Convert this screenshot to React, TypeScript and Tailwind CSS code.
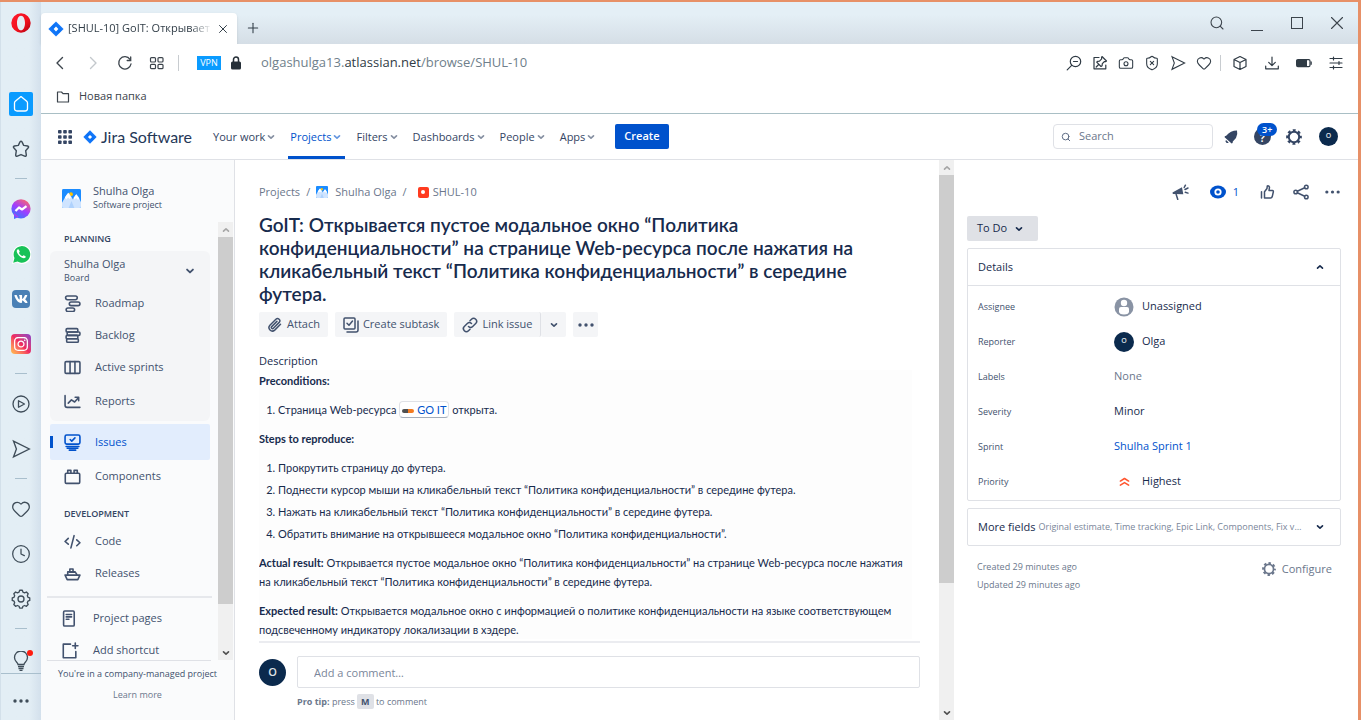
import React from "react";
import { Camera, Heart, Search, X, Plus, ShieldX, Clock } from "lucide-react";
import { FaVk, FaInstagram } from "react-icons/fa";

type IconProps = { className?: string; children: React.ReactNode; box?: number; stroke?: number };

function Svg({ className = "size-4", children, box = 24, stroke = 2 }: IconProps) {
  return (
    <svg
      className={className}
      viewBox={`0 0 ${box} ${box}`}
      fill="none"
      stroke="currentColor"
      strokeWidth={stroke}
      strokeLinecap="round"
      strokeLinejoin="round"
      aria-hidden="true"
    >
      {children}
    </svg>
  );
}

function Chevron({ className = "size-3", up = false }: { className?: string; up?: boolean }) {
  return (
    <Svg className={className} box={12} stroke={1.6}>
      <path d={up ? "M3.5 7.2 6 4.8l2.5 2.4" : "M3.5 4.8 6 7.2l2.5-2.4"} />
    </Svg>
  );
}

function JiraMark({ className }: { className: string }) {
  return (
    <svg className={className} viewBox="0 0 16 16" aria-hidden="true">
      <defs>
        <linearGradient id="jm" x1="0" y1="1" x2="1" y2="0">
          <stop offset="0" stopColor="#2684ff" />
          <stop offset="0.5" stopColor="#0870f5" />
          <stop offset="1" stopColor="#2684ff" />
        </linearGradient>
      </defs>
      <path fill="url(#jm)" d="M8 .4 15.6 8 8 15.6.4 8Z" />
      <path fill="#fff" d="M8 5.6 10.4 8 8 10.4 5.6 8Z" />
    </svg>
  );
}

function ProjectIcon({ className }: { className: string }) {
  return (
    <svg className={className} viewBox="0 0 20 20" aria-hidden="true">
      <rect width="20" height="20" rx="1.5" fill="#1b8cff" />
      <circle cx="9.500" cy="5.400" r="2" fill="#ffc400" />
      <path fill="#cfe4ff" d="M0 14.500 4.500 6.500 7 4l2.500 3.500 2 3.500 3.500-5.500 2.500 3L20 14v4.5q0 1.500-1.500 1.500h-17Q0 20 0 18.500Z" />
      <path fill="#fff" d="M3 9 6.500 4l3 5-1.500 1.500L6.500 9l-2 2ZM12 9.500l3-4L18 10l-1 1.500-2-2-2 1.500Z" />
      <path fill="#8fc0fb" d="M10 12.500 13 20H7Z" opacity=".5" />
    </svg>
  );
}

function SendIcon({ className }: { className: string }) {
  return (
    <Svg className={className} stroke={1.6}>
      <path d="M3 2.500 22 12 3 21.500 6.500 12Z" strokeLinejoin="miter" />
    </Svg>
  );
}

function Dots({ className }: { className: string }) {
  return (
    <svg className={className} viewBox="0 0 18 4" fill="currentColor" aria-hidden="true">
      <circle cx="3" cy="2" r="1.700" />
      <circle cx="9" cy="2" r="1.700" />
      <circle cx="15" cy="2" r="1.700" />
    </svg>
  );
}

function Cog({ className }: { className: string }) {
  return (
    <svg className={className} viewBox="0 0 24 24" fill="none" stroke="currentColor" aria-hidden="true">
      <circle cx="12" cy="12" r="7.800" strokeWidth="3" />
      <circle cx="12" cy="12" r="10" strokeWidth="3.600" strokeDasharray="4.200 3.654" strokeDashoffset="2.100" />
    </svg>
  );
}

function Avatar({ className }: { className: string }) {
  return (
    <span className={`flex shrink-0 items-center justify-center rounded-full bg-[#0b2a4d] font-semibold text-[#dfe1e6] ${className}`}>
      O
    </span>
  );
}

function RailItem({ label, children }: { label: string; children: React.ReactNode }) {
  return (
    <button aria-label={label} className="flex h-[45px] w-full shrink-0 items-center justify-center text-[#3f4d59]">
      {children}
    </button>
  );
}

function RailRule() {
  return (
    <div className="flex h-[15px] shrink-0 items-center justify-center">
      <span className="h-px w-3 bg-[#a9bfcd]" />
    </div>
  );
}

function OperaRail() {
  return (
    <aside className="flex w-[41px] shrink-0 flex-col border-l border-[#d3e0ea] bg-linear-to-r from-[#e3eef5] from-70% to-[#d3e0ec]">
      <button aria-label="Opera" className="flex h-[79px] shrink-0 items-start justify-center pt-[11px]">
        <svg className="size-5" viewBox="0 0 20 20" aria-hidden="true">
          <defs>
            <linearGradient id="op" x1="0" y1="0" x2="1" y2="1">
              <stop offset="0" stopColor="#ff1b2d" />
              <stop offset="0.600" stopColor="#f0101c" />
              <stop offset="1" stopColor="#a70014" />
            </linearGradient>
          </defs>
          <path
            fill="url(#op)"
            fillRule="evenodd"
            d="M10 .3a9.700 9.700 0 1 1 0 19.400A9.700 9.700 0 0 1 10 .3Zm0 2.400c-2.500 0-4 3.200-4 7.300s1.500 7.300 4 7.300 4-3.200 4-7.300-1.500-7.300-4-7.300Z"
          />
        </svg>
      </button>
      <RailItem label="Home">
        <span className="flex size-6 items-center justify-center rounded-xs bg-[#0a9bff] text-white">
          <Svg className="size-[18px]" box={18} stroke={1.3}>
            <path d="M2.500 8Q2.500 7 3.300 6.300L9 1.600l5.700 4.700q.8.700.8 1.700v5.500q0 2.500-2.500 2.500H5q-2.500 0-2.500-2.500Z" />
          </Svg>
        </span>
      </RailItem>
      <RailItem label="Speed dial">
        <Svg className="size-5" box={24} stroke={1.7}>
          <path d="M10.800 3.500q1.200-1.500 2.400 0L15.200 7.600l4.700.8q2 .6.800 2.200L17.600 14l.8 5.300q0 2-2 1.300L12 18.700l-4.400 1.900q-2 .7-2-1.300L6.400 14l-3.100-3.400q-1.200-1.600.8-2.200l4.700-.8Z" />
        </Svg>
      </RailItem>
      <RailRule />
      <RailItem label="Messenger">
        <svg className="size-5" viewBox="0 0 20 20" aria-hidden="true">
          <defs>
            <linearGradient id="ms" x1="0.200" y1="1" x2="0.800" y2="0">
              <stop offset="0" stopColor="#2b7dff" />
              <stop offset="0.500" stopColor="#a23cff" />
              <stop offset="1" stopColor="#ff6968" />
            </linearGradient>
          </defs>
          <g fill="url(#ms)">
            <circle cx="10" cy="9.800" r="9.600" />
            <path d="M3 14v6l5-2Z" />
          </g>
          <path d="m4.500 12 3.500-3.500 3 2 4.500-3.300" fill="none" stroke="#fff" strokeWidth="2.200" strokeLinejoin="round" />
        </svg>
      </RailItem>
      <RailItem label="WhatsApp">
        <svg className="size-5" viewBox="0 0 20 20" aria-hidden="true">
          <path fill="#fff" d="M1 20l1.500-5.500A9.500 9.500 0 1 1 6 18.500Z" />
          <path fill="#18c258" d="M2.200 18.700l1.300-4.600A8.300 8.300 0 1 1 6.500 17.400Z" />
          <path fill="#fff" d="M6.500 5.500c-1.500 1-.8 3.500 1.500 5.900s5 3.500 6.300 2.300c.7-.7.600-1.400-.2-1.800l-1.500-.7c-.5-.2-.8.900-1.400.8-1.200-.4-2.700-1.800-3.200-3-.1-.5.900-.8.700-1.400L8 5.900c-.3-.7-.9-.8-1.500-.4Z" />
        </svg>
      </RailItem>
      <RailItem label="VK">
        <span className="flex size-[18px] items-center justify-center rounded-[4px] bg-[#4a80b5] text-white">
          <FaVk className="size-[14px]" />
        </span>
      </RailItem>
      <RailItem label="Instagram">
        <span className="flex size-5 items-center justify-center rounded-[4px] bg-linear-to-bl from-[#8a3ac8] via-[#f0285f] to-[#ffc14d] text-white">
          <FaInstagram className="size-4" />
        </span>
      </RailItem>
      <RailRule />
      <RailItem label="Player">
        <Svg className="size-[18px]" box={18} stroke={1.3}>
          <circle cx="9" cy="9" r="8" />
          <path d="M6.500 5.700 12.500 9l-6 3.300Z" />
        </Svg>
      </RailItem>
      <RailItem label="My Flow">
        <SendIcon className="size-5" />
      </RailItem>
      <RailRule />
      <RailItem label="Pinboards">
        <Heart className="size-5" strokeWidth={1.5} />
      </RailItem>
      <RailItem label="History">
        <Clock className="size-5" strokeWidth={1.5} />
      </RailItem>
      <RailItem label="Settings">
        <Svg className="size-5" stroke={1.6}>
          <circle cx="12" cy="12" r="3.600" />
          <path d="M9.700 3.700 10.400 1.500h3.200l.7 2.200 2 .9 2.200-1 2.100 2.200-1 2.200.8 2 2.100.7v3l-2.100.8-.8 2 1 2.200-2.100 2.100-2.200-1-2 .9-.7 2.200h-3.200l-.7-2.200-2-.9-2.200 1-2.100-2.100 1-2.200-.8-2L1.500 13.700v-3l2.100-.7.8-2-1-2.200 2.100-2.200 2.200 1Z" />
        </Svg>
      </RailItem>
      <RailRule />
      <button aria-label="Tips" className="relative flex h-[38px] shrink-0 items-end justify-center border-b border-[#a9bfcd] pb-[2px] text-[#3f4d59]">
        <svg className="h-5 w-4" viewBox="0 0 16 20" fill="none" stroke="currentColor" strokeWidth="1.300" aria-hidden="true">
          <path d="M5 13.500c0-2-3.500-3-3.500-7a6.500 6.500 0 0 1 13 0c0 4-3.500 5-3.500 7Z" />
          <path d="M5 15.500h6M5.500 17.500h5M6.500 19.300h3" />
        </svg>
        <span className="absolute top-[14px] right-2 size-[6px] rounded-full bg-[#ff1b0e]" />
      </button>
      <button aria-label="More" className="flex flex-1 items-center justify-center pt-2 text-[#3f4d59]">
        <Dots className="h-1 w-[18px]" />
      </button>
    </aside>
  );
}

function TabBar() {
  return (
    <div className="flex h-[42px] shrink-0 items-end bg-linear-to-b from-[#e4eff6] from-30% to-[#d5dee6]">
      <div className="flex h-[31px] w-[196px] items-center rounded-t-sm bg-white px-[7px] shadow-sm">
        <JiraMark className="size-4 shrink-0" />
        <span className="ml-1 flex-1 overflow-hidden mask-r-from-85% text-[11px] whitespace-nowrap text-[#323e48]">
          [SHUL-10] GoIT: Открывает
        </span>
        <button aria-label="Close tab" className="ml-1 text-[#323e48]">
          <X className="size-[14px]" strokeWidth={1.7} />
        </button>
      </div>
      <button aria-label="New tab" className="mb-2 ml-2 text-[#323e48]">
        <Plus className="size-4" strokeWidth={1.6} />
      </button>
      <div className="mr-[13px] mb-[13px] ml-auto flex items-center gap-6 text-[#3c444c]">
        <button aria-label="Search tabs">
          <Search className="size-4" strokeWidth={1.6} />
        </button>
        <button aria-label="Minimize" className="flex h-4 w-4 items-end justify-center">
          <span className="h-px w-3 bg-current" />
        </button>
        <button aria-label="Maximize" className="flex size-4 items-center justify-center">
          <span className="size-3 border border-current" />
        </button>
        <button aria-label="Close" className="flex size-4 items-center justify-center">
          <Svg className="size-3" box={12} stroke={1.1}>
            <path d="m.5.5 11 11M11.500.5l-11 11" />
          </Svg>
        </button>
      </div>
    </div>
  );
}

function AddressBar() {
  return (
    <div className="flex h-[38px] shrink-0 items-center bg-white px-3 text-[#3c444c]">
      <button aria-label="Back">
        <Svg className="size-4" box={16} stroke={1.4}>
          <path d="M9.500 2.500 4 8l5.500 5.500" />
        </Svg>
      </button>
      <button aria-label="Forward" className="ml-4 text-[#c3c8cc]">
        <Svg className="size-4" box={16} stroke={1.4}>
          <path d="m5.500 2.500 5.500 5.500-5.500 5.500" />
        </Svg>
      </button>
      <button aria-label="Reload" className="ml-4">
        <Svg className="size-4" box={16} stroke={1.3}>
          <path d="M13 4.300A6.200 6.200 0 1 0 14 9" />
          <path d="M13.700 2v3.500h-3.500" strokeLinejoin="miter" />
        </Svg>
      </button>
      <button aria-label="Speed dial" className="ml-4">
        <Svg className="size-4" box={16} stroke={1.2}>
          <rect x="1.500" y="2.600" width="5" height="4.400" rx="1" />
          <rect x="9" y="2.600" width="5" height="4.400" rx="1" />
          <rect x="1.500" y="9.300" width="5" height="4.400" rx="1" />
          <rect x="9" y="9.300" width="5" height="4.400" rx="1" />
        </Svg>
      </button>
      <span className="mx-[13px] h-4 w-px bg-[#c8ccd0]" />
      <button className="ml-[5px] h-[14px] w-6 bg-[#0a9bff] text-center text-[9px] leading-[14px] text-white">VPN</button>
      <svg className="ml-[9px] h-[14px] w-3" viewBox="0 0 12 14" aria-hidden="true">
        <path fill="none" stroke="#262f38" strokeWidth="1.500" d="M3.500 6V3.500a2.500 2.500 0 0 1 5 0V6" />
        <rect x="1" y="5.500" width="10" height="8" rx="1.500" fill="#262f38" />
      </svg>
      <button aria-label="Address" className="ml-[19px] flex-1 text-left text-[13px] text-[#6f7f8b]">
        olgashulga13.<span className="text-[#2f3b45]">atlassian.net</span>/browse/SHUL-10
      </button>
      <div className="flex items-center gap-[10px] text-[#303b45]">
        <button aria-label="Zoom out">
          <Svg className="size-4" box={16} stroke={1.2}>
            <circle cx="9.500" cy="6.500" r="5.200" />
            <path d="m5.700 10.300-4.500 4.500M7.500 6.500h4" />
          </Svg>
        </button>
        <button aria-label="Pin page">
          <Svg className="size-4" box={16} stroke={1.2}>
            <path d="M7 2.500H2v11.300h11.800V10" />
            <path d="m10 1.500 4.500 4.500-1 .7-1-.2-2.200 2.200-.2 2L9 11.500 4.700 7.200l.8-.9 2-.2 2.200-2.200-.2-1.200ZM6.700 9.500l-2.500 2.500" />
          </Svg>
        </button>
        <button aria-label="Snapshot">
          <Camera className="size-4" strokeWidth={1.6} />
        </button>
        <button aria-label="Ad blocker">
          <ShieldX className="size-4" strokeWidth={1.6} />
        </button>
        <button aria-label="Send">
          <SendIcon className="size-4" />
        </button>
        <button aria-label="Favourite">
          <Heart className="size-4" strokeWidth={1.6} />
        </button>
        <span className="-ml-[2px] mr-px h-4 w-px bg-[#c8ccd0]" />
        <div className="flex items-center gap-4">
          <button aria-label="Extensions">
            <Svg className="size-4" box={16} stroke={1.2}>
              <path d="m8 1.500 6 3v7l-6 3-6-3v-7ZM2 4.500l6 3 6-3M8 7.500v7" />
            </Svg>
          </button>
          <button aria-label="Downloads">
            <Svg className="size-4" box={16} stroke={1.2}>
              <path d="M8 2v8.500M4.700 7.300 8 10.600l3.300-3.300M1.700 11v2.800h12.600V11" />
            </Svg>
          </button>
          <button aria-label="Battery saver">
            <svg className="size-4" viewBox="0 0 16 16" aria-hidden="true">
              <rect x=".6" y="4.600" width="13.400" height="7" rx="1.300" fill="none" stroke="currentColor" strokeWidth="1.200" />
              <path fill="currentColor" d="M1 5h10v6.500H1ZM14.500 6.500h1.300v3.200h-1.300Z" />
            </svg>
          </button>
          <button aria-label="Easy setup" className="mr-[2px]">
            <Svg className="size-4" box={16} stroke={1.2}>
              <path d="M2 3.500h12M2 8h12M2 12.500h12M5.500 2v3M11 6.500v3M5.500 11v3" />
            </Svg>
          </button>
        </div>
      </div>
    </div>
  );
}

const navItems = ["Your work", "Projects", "Filters", "Dashboards", "People", "Apps"];

function JiraHeader() {
  return (
    <header className="flex h-[46px] shrink-0 items-center border-b border-[#dfe1e6] bg-white pr-5 pl-4 text-[#344563]">
      <button aria-label="Switch to">
        <svg className="size-4" viewBox="0 0 16 16" fill="currentColor" aria-hidden="true">
          {[1, 6.2, 11.4].map((y) => [1, 6.2, 11.4].map((x) => <rect key={`${x}-${y}`} x={x} y={y} width="3.600" height="3.600" rx="0.800" />))}
        </svg>
      </button>
      <a href="#home" className="ml-[10px] flex items-center gap-1">
        <JiraMark className="size-[14px]" />
        <span className="font-['Lato',sans-serif] text-[16px] leading-5 whitespace-nowrap text-[#253858]">Jira Software</span>
      </a>
      <nav className="ml-[15px] flex gap-px self-stretch text-[11px] font-medium">
        {navItems.map((item) => (
          <button
            key={item}
            className={
              item === "Projects"
                ? "mx-1 flex items-center border-b-3 border-[#0052cc] px-[2px] pt-1 whitespace-nowrap text-[#0052cc]"
                : "flex items-center px-[6px] pt-px whitespace-nowrap"
            }
          >
            {item}
            <Chevron className="size-3 opacity-60" />
          </button>
        ))}
      </nav>
      <button className="ml-3 h-[25px] rounded-xs bg-[#0052cc] px-[9px] text-[11px] font-semibold text-white">Create</button>
      <label className="ml-auto flex h-[25px] w-40 items-center gap-2 rounded-sm border border-[#dfe1e6] px-[7px] text-[#5e6c84]">
        <Search className="size-[10px] shrink-0" strokeWidth={2.4} />
        <input type="search" aria-label="Search" placeholder="Search" className="w-full min-w-0 text-[11px] outline-none placeholder:text-[#6b778c]" />
      </label>
      <button aria-label="Notifications" className="ml-[10px] text-[#344563]">
        <svg className="size-4" viewBox="0 0 16 16" fill="currentColor" aria-hidden="true">
          <path d="M14 1.500Q15 5.500 13 9L9.800 12.600 9.600 14 8.600 14.400 1.600 8.200 1.800 7.200 3.200 6.800Q7.500 1.500 14 1.500Z" />
          <path d="M3 11 5.700 13.400a1.800 1.800 0 0 1-2.700-2.400Z" />
        </svg>
      </button>
      <button aria-label="Help" className="relative ml-[15px] flex size-[17px] items-end justify-center rounded-full bg-[#344563] text-[10px] leading-[13px] font-bold text-white">
        ?
        <span className="absolute -top-[5px] left-[3px] z-10 rounded-full bg-[#0052cc] px-[5px] text-[9px] leading-[13px] font-semibold">3+</span>
      </button>
      <button aria-label="Settings" className="ml-[15px]">
        <Cog className="size-4" />
      </button>
      <button aria-label="Profile" className="ml-[17px]">
        <Avatar className="size-[19px] text-[7px]" />
      </button>
    </header>
  );
}

const navIcons: Record<string, React.ReactNode> = {
  Roadmap: (
    <>
      <rect x="1.500" y="1" width="11" height="3.400" rx="1.700" />
      <rect x="5" y="6.600" width="10" height="3.400" rx="1.700" />
      <rect x="2" y="12.200" width="8" height="3.400" rx="1.700" />
    </>
  ),
  Backlog: (
    <>
      <rect x="2" y="1.500" width="11" height="3.200" rx="1" />
      <rect x="3" y="4.700" width="12" height="3.200" rx="1" />
      <rect x="2" y="7.900" width="11" height="3.200" rx="1" />
      <rect x="2.500" y="11.100" width="11" height="3.200" rx="1" />
    </>
  ),
  "Active sprints": (
    <>
      <rect x="1" y="2.500" width="14" height="11" rx="1" />
      <path d="M5.700 2.500v11M10.300 2.500v11" />
    </>
  ),
  Reports: <path d="M1 2.500v9q0 2 2 2h12M4 9.500l3-3 3 2 3.500-4M10.500 4h3.300v3.300" />,
  Issues: (
    <>
      <rect x="1" y="1" width="14" height="8.500" rx="1.500" />
      <path d="m5.800 5.200 1.500 1.500 3-3M2 11.700h12M3 13.400h10M5 15.200h6" />
    </>
  ),
  Components: (
    <>
      <rect x="1.200" y="5" width="13.600" height="9.500" rx="1" />
      <path d="M3.500 5V2.200h3V5M9.500 5V2.200h3V5" />
    </>
  ),
  Code: <path d="M4 5 1 8l3 2.500M12 6.500l3 2.700L12 12M9.500 2.500l-3 11.500" />,
  Releases: (
    <>
      <path d="M1 9.500h14l-2 4.300H3L1 9.500ZM3.500 9.500v-3h7l2 3M5.500 6V3.700h3V6M5 6.700h5" />
    </>
  ),
  "Project pages": (
    <>
      <rect x="1.500" y="1" width="10" height="14" rx="1" />
      <path d="M4 4.300h5M4 6.500h5M4 8.700h2.500" />
    </>
  ),
  "Add shortcut": <path d="M8 2H1.200v12.800H13V9M12.500 1v5M10 3.500h5" />,
};

function SideLink({ name, active = false, height = "h-8" }: { name: string; active?: boolean; height?: string }) {
  return (
    <a
      href={`#${name}`}
      className={`flex items-center gap-[14px] pl-[14px] text-[11px] ${height} ${
        active ? "relative rounded-xs bg-[#e2edfd] text-[#0052cc]" : "text-[#42526e]"
      }`}
    >
      {active && <span className="absolute left-0 h-3 w-[3px] bg-[#0052cc]" />}
      <Svg className="size-[17px] shrink-0" box={16} stroke={1.5}>
        {navIcons[name]}
      </Svg>
      {name}
    </a>
  );
}

function Scrollbar({ thumb }: { thumb: string }) {
  return (
    <div className="flex w-[15px] shrink-0 flex-col bg-[#f0f0f0] text-[#a6a6a6]">
      <span className="flex h-[15px] shrink-0 items-center justify-center">
        <Chevron up />
      </span>
      <div className="flex-1">
        <div className={`bg-[#cdcdcd] ${thumb}`} />
      </div>
      <span className="flex h-[15px] shrink-0 items-center justify-center text-[#505050]">
        <Chevron />
      </span>
    </div>
  );
}

function JiraSidebar() {
  return (
    <aside className="flex w-[194px] shrink-0 flex-col border-r border-[#dfe1e6] bg-[#fafbfc] text-[#42526e]">
      <div className="flex h-[62px] shrink-0 items-center gap-3 pt-[14px] pl-[21px]">
        <ProjectIcon className="size-[19px]" />
        <div>
          <div className="text-[11px] leading-[14px] font-medium">Shulha Olga</div>
          <div className="text-[9px] leading-[14px]">Software project</div>
        </div>
      </div>
      <div className="flex min-h-0 flex-1 overflow-hidden pr-px">
        <div className="min-w-0 flex-1 overflow-hidden pr-2 pl-[9px]">
          <h2 className="mt-[9px] pl-[14px] text-[9px] leading-4 font-semibold text-[#344563]">PLANNING</h2>
          <div className="mt-1 h-[170px] rounded-md bg-[#f4f5f7] pt-[6px]">
            <button className="flex w-full items-center justify-between pr-[13px] pb-[2px] pl-[14px] text-left">
              <span>
                <span className="block text-[11px] leading-[14px] font-medium">Shulha Olga</span>
                <span className="block text-[9px] leading-[14px]">Board</span>
              </span>
              <Chevron className="size-[14px]" />
            </button>
            <SideLink name="Roadmap" />
            <SideLink name="Backlog" />
            <SideLink name="Active sprints" />
            <SideLink name="Reports" height="h-9" />
          </div>
          <div className="mt-[3px]">
            <SideLink name="Issues" active height="h-9" />
            <SideLink name="Components" />
          </div>
          <h2 className="mt-[14px] pl-[14px] text-[9px] leading-4 font-semibold text-[#344563]">DEVELOPMENT</h2>
          <div className="mt-[3px]">
            <SideLink name="Code" />
            <SideLink name="Releases" />
          </div>
          <div className="mt-[7px] -mr-[2px] -ml-[3px] border-t-2 border-[#e6e8ec] pt-1 pl-px">
            <SideLink name="Project pages" />
            <SideLink name="Add shortcut" />
          </div>
        </div>
        <Scrollbar thumb="h-[90%]" />
      </div>
      <div className="h-[60px] shrink-0">
        <div className="mr-[23px] ml-[6px] border-t border-[#dfe1e6]" />
        <p className="mt-[6px] text-center text-[9px] leading-[14px] whitespace-nowrap">You're in a company-managed project</p>
        <a href="#learn" className="mt-[7px] block text-center text-[9px] leading-[14px] text-[#6b778c]">
          Learn more
        </a>
      </div>
    </aside>
  );
}

const toolButton = "flex h-[25px] items-center gap-1 rounded-xs bg-[#f4f5f7] px-2 text-[11px] font-medium text-[#42526e]";

function IssueBody() {
  return (
    <main className="flex min-w-0 flex-1 flex-col bg-white pr-[19px] pl-6 text-[#172b4d]">
      <div className="min-h-0 flex-1 overflow-hidden">
        <nav aria-label="Breadcrumb" className="mt-6 flex h-4 items-center gap-[6px] text-[11px] text-[#6b778c]">
          <a href="#projects">Projects</a>
          <span>/</span>
          <a href="#shulha" className="flex items-center gap-[7px]">
            <ProjectIcon className="size-3" />
            Shulha Olga
          </a>
          <span>/</span>
          <a href="#shul-10" className="ml-[5px] flex items-center gap-1">
            <span className="flex size-[11px] items-center justify-center rounded-xs bg-[#ff3b1f]">
              <span className="size-1 rounded-full bg-white" />
            </span>
            SHUL-10
          </a>
        </nav>
        <h1 className="mt-[13px] mr-2 font-['Lato','Open_Sans',sans-serif] text-[19px] leading-[23px] font-semibold">
          GoIT: Открывается пустое модальное окно “Политика
          <br />
          конфиденциальности” на странице Web-ресурса после нажатия на
          <br />
          кликабельный текст “Политика конфиденциальности” в середине
          <br />
          футера.
        </h1>
        <div className="mt-[7px] flex gap-[7px]">
          <button className={toolButton}>
            <Svg className="size-4" box={16} stroke={1.5}>
              <path d="m13.500 7.200-5.800 5.900a3.400 3.400 0 0 1-4.800-4.800l6-6.100a2.300 2.300 0 0 1 3.300 3.200l-5.800 5.900a1.200 1.200 0 0 1-1.700-1.700l5.200-5.200" />
            </Svg>
            Attach
          </button>
          <button className={toolButton}>
            <Svg className="size-4" box={16} stroke={1.5}>
              <rect x="1" y="1" width="11" height="11" rx="1" />
              <path d="m4 6.200 2 2L9.500 4M15 4v9q0 2-2 2H4" />
            </Svg>
            Create subtask
          </button>
          <div className="flex">
            <button className={`${toolButton} border-r border-[#dfe1e6]`}>
              <Svg className="size-4" box={16} stroke={1.5}>
                <path d="M6.500 9.500a3 3 0 0 0 4.200 0l3-3a2.900 2.900 0 0 0-4.200-4.200L8 3.800M9.500 6.500a3 3 0 0 0-4.200 0l-3 3a2.900 2.900 0 0 0 4.200 4.200L8 12.200" />
              </Svg>
              Link issue
            </button>
            <button aria-label="Link options" className="flex h-[25px] w-[25px] items-center justify-center rounded-xs bg-[#f4f5f7] text-[#42526e]">
              <Chevron />
            </button>
          </div>
          <button aria-label="More actions" className="flex h-[25px] w-[25px] items-center justify-center rounded-xs bg-[#f4f5f7] text-[#42526e]">
            <Dots className="h-1 w-[18px]" />
          </button>
        </div>
        <h2 className="mt-[15px] text-[11px] leading-[18px] font-medium">Description</h2>
        <div className="-ml-[7px] mr-2 flex flex-col gap-[10px] bg-[#fdfdfd] pt-px pl-[7px] font-['Lato','Open_Sans',sans-serif] text-[11px] leading-[19px]">
          <p className="font-bold">Preconditions:</p>
          <ol className="list-decimal pl-[19px]">
            <li>
              Страница Web-ресурса{" "}
              <a href="#goit" className="rounded-sm border border-[#dfe1e6] border-b-[#a5adba] bg-white px-[2px] py-px text-[#0052cc]">
                <span className="inline-block h-1 w-[6px] rounded-l-xs bg-[#505050] align-middle" />
                <span className="mr-[3px] inline-block h-1 w-[6px] rounded-r-xs bg-[#f47b20] align-middle" />
                GO IT
              </a>{" "}
              открыта.
            </li>
          </ol>
          <p className="font-bold">Steps to reproduce:</p>
          <ol className="flex list-decimal flex-col gap-[3px] pl-[19px]">
            <li>Прокрутить страницу до футера.</li>
            <li>Поднести курсор мыши на кликабельный текст “Политика конфиденциальности” в середине футера.</li>
            <li>Нажать на кликабельный текст “Политика конфиденциальности” в середине футера.</li>
            <li>Обратить внимание на открывшееся модальное окно “Политика конфиденциальности”.</li>
          </ol>
          <p>
            <strong>Actual result:</strong> Открывается пустое модальное окно “Политика конфиденциальности” на странице Web-ресурса после нажатия
            <br />
            на кликабельный текст “Политика конфиденциальности” в середине футера.
          </p>
          <p>
            <strong>Expected result:</strong> Открывается модальное окно с информацией о политике конфиденциальности на языке соответствующем
            <br />
            подсвеченному индикатору локализации в хэдере.
          </p>
        </div>
      </div>
      <form className="h-[79px] shrink-0 border-t-2 border-[#ebecf0] pt-[13px]">
        <div className="flex items-center gap-[11px]">
          <Avatar className="size-[27px] text-[11px]" />
          <input
            type="text"
            aria-label="Add a comment"
            placeholder="Add a comment…"
            className="h-8 min-w-0 flex-1 rounded-xs border border-[#dfe1e6] px-4 text-[11px] outline-none placeholder:text-[#7a869a]"
          />
        </div>
        <p className="mt-[6px] ml-[38px] text-[9px] leading-4 text-[#6b778c]">
          <strong>Pro tip:</strong> press <kbd className="rounded-xs bg-[#dfe1e6] px-1 py-px font-['Open_Sans',sans-serif] font-bold text-[#42526e]">M</kbd> to comment
        </p>
      </form>
    </main>
  );
}

const fields: { label: string; value: string; icon?: React.ReactNode; tone?: string }[] = [
  {
    label: "Assignee",
    value: "Unassigned",
    icon: (
      <svg className="size-5" viewBox="0 0 20 20" aria-hidden="true">
        <circle cx="10" cy="10" r="9.500" fill="#8993a4" />
        <circle cx="10" cy="6" r="3.200" fill="#fff" />
        <path fill="#fff" d="M5 12q0-2 2-2h6q2 0 2 2v2.500q0 3-5 3t-5-3Z" />
      </svg>
    ),
  },
  { label: "Reporter", value: "Olga", icon: <Avatar className="size-5 text-[7px]" /> },
  { label: "Labels", value: "None", tone: "text-[#6b778c]" },
  { label: "Severity", value: "Minor" },
  { label: "Sprint", value: "Shulha Sprint 1", tone: "text-[#0052cc]" },
  {
    label: "Priority",
    value: "Highest",
    icon: (
      <span className="flex w-5 justify-center text-[#ff5630]">
        <Svg className="size-[11px]" box={12} stroke={1.7}>
          <path d="M1.500 5.500 6 2.700l4.500 2.800M1.500 10 6 7.200l4.500 2.800" />
        </Svg>
      </span>
    ),
  },
];

function DetailsPanel() {
  return (
    <aside className="flex w-[404px] shrink-0 flex-col items-stretch bg-white pr-[17px] pl-[13px] text-[#172b4d]">
      <div className="mt-6 flex h-4 items-center justify-end text-[#42526e]">
        <button aria-label="Feedback">
          <svg className="size-[17px]" viewBox="0 0 17 17" aria-hidden="true">
            <path fill="currentColor" d="M.5 8.500 10 3.200l1.300 7L.8 10Z" />
            <path fill="none" stroke="currentColor" strokeWidth="1.500" strokeLinecap="round" d="m4.200 10.500 1.500 4.800M12.200 3.500l1.200-2.300M13 5.500l3-1.500M13.300 8.200l2.700.9" />
          </svg>
        </button>
        <button aria-label="Watch" className="ml-[21px] flex items-center gap-[7px] text-[11px] text-[#0052cc]">
          <svg className="h-[14px] w-4" viewBox="0 0 16 14" aria-hidden="true">
            <ellipse cx="8" cy="7" rx="8" ry="6.500" fill="currentColor" />
            <circle cx="8" cy="7" r="2.700" fill="none" stroke="#fff" strokeWidth="1.800" />
          </svg>
          1
        </button>
        <button aria-label="Like" className="ml-5">
          <Svg className="size-4" box={16} stroke={1.5}>
            <path d="M5.500 7.700 8 4.500l.3-2.600q1.700-.4 2.200 1.300L10 6.500h3.400q1.200.2.900 1.500l-1.100 4.800q-.4 1.200-1.600 1.200H5.500Z" />
            <path d="M2.500 7.700V14" />
          </Svg>
        </button>
        <button aria-label="Share" className="ml-[18px]">
          <Svg className="size-4" box={16} stroke={1.5}>
            <circle cx="2.700" cy="8" r="1.800" />
            <circle cx="13.300" cy="3" r="1.800" />
            <circle cx="13.300" cy="13" r="1.800" />
            <path d="m4.300 7.200 7.400-3.500M4.300 8.800l7.400 3.500" />
          </Svg>
        </button>
        <button aria-label="Actions" className="ml-[15px]">
          <Dots className="h-1 w-[17px]" />
        </button>
      </div>
      <button aria-haspopup="menu" className="mt-4 flex h-[25px] w-[71px] shrink-0 items-center justify-between rounded-xs bg-[#dfe1e6] pr-[13px] pl-[10px] text-[11px] font-medium">
        To Do
        <Chevron />
      </button>
      <section className="mt-[7px] rounded-xs border border-[#dfe1e6]">
        <button className="flex h-[37px] w-full items-center justify-between border-b border-[#dfe1e6] pr-[14px] pl-[10px] text-[11px] font-medium">
          Details
          <Chevron up />
        </button>
        <dl className="pt-[3px] pb-px">
          {fields.map((f) => (
            <div key={f.label} className="flex h-[35px] items-center pl-[10px]">
              <dt className="w-[136px] text-[9px] font-medium text-[#42526e]">{f.label}</dt>
              <dd className={`flex items-center gap-2 text-[11px] ${f.tone ?? ""}`}>
                {f.icon}
                {f.label === "Sprint" ? <a href="#sprint">{f.value}</a> : f.value}
              </dd>
            </div>
          ))}
        </dl>
      </section>
      <button className="mt-[7px] flex h-[38px] shrink-0 items-center rounded-xs border border-[#dfe1e6] pr-[14px] pl-[10px] text-left">
        <span className="text-[11px] font-medium whitespace-nowrap">More fields</span>
        <span className="ml-[3px] min-w-0 flex-1 truncate text-[9px] text-[#7a869a]">
          Original estimate, Time tracking, Epic Link, Components, Fix versions
        </span>
        <Chevron className="ml-[10px] size-3 shrink-0" />
      </button>
      <div className="mt-3 flex justify-between pr-[9px] pl-[10px] text-[#6b778c]">
        <div className="text-[9px] leading-[18px]">
          <p>Created 29 minutes ago</p>
          <p>Updated 29 minutes ago</p>
        </div>
        <button className="flex h-[22px] items-center gap-[6px] text-[11px] font-medium">
          <Cog className="size-[14px]" />
          Configure
        </button>
      </div>
    </aside>
  );
}

export default function App() {
  return (
    <div className="flex h-screen overflow-hidden border-t-2 border-r-3 border-[#e79067] font-['Open_Sans','Noto_Sans',sans-serif]">
      <OperaRail />
      <div className="flex min-w-0 flex-1 flex-col">
        <TabBar />
        <AddressBar />
        <div className="flex h-8 shrink-0 items-center gap-[9px] border-b border-[#a9bfc5] bg-white pb-[2px] pl-[15px] text-[11px] text-[#3c444c]">
          <Svg className="size-[14px]" box={14} stroke={1.2}>
            <path d="M1.500 12V2h4l1.500 1.700h5.500V12Z" />
          </Svg>
          <a href="#folder">Новая папка</a>
        </div>
        <JiraHeader />
        <div className="flex min-h-0 flex-1">
          <JiraSidebar />
          <IssueBody />
          <Scrollbar thumb="h-[77%]" />
          <DetailsPanel />
        </div>
      </div>
    </div>
  );
}
